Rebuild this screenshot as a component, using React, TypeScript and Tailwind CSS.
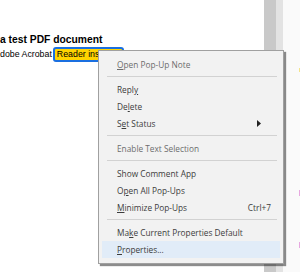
type Item = { label: string; u?: number; sub?: boolean; key?: string; dim?: boolean; hover?: boolean };

const groups: Item[][] = [
  [{ label: "Open Pop-Up Note", u: 0, dim: true }],
  [
    { label: "Reply", u: 4 },
    { label: "Delete", u: 2 },
    { label: "Set Status", u: 1, sub: true },
  ],
  [{ label: "Enable Text Selection", dim: true }],
  [
    { label: "Show Comment App" },
    { label: "Open All Pop-Ups", u: 1 },
    { label: "Minimize Pop-Ups", u: 0, key: "Ctrl+7" },
  ],
  [
    { label: "Make Current Properties Default", u: 2 },
    { label: "Properties...", u: 0, hover: true },
  ],
];

function Label({ text, u }: { text: string; u?: number }) {
  if (u === undefined) return <span>{text}</span>;
  return (
    <span>
      {text.slice(0, u)}
      <span className="underline underline-offset-1">{text[u]}</span>
      {text.slice(u + 1)}
    </span>
  );
}

function MenuRow({ item }: { item: Item }) {
  return (
    <div
      className={`mx-[3px] h-[17px] flex items-center justify-between whitespace-nowrap pl-[15px] pr-[9px] ${
        item.hover ? "bg-[#e1ecf8]" : ""
      } ${item.dim ? "text-[#6d6d6d]" : "text-[#3c3c3c]"}`}
    >
      <Label text={item.label} u={item.u} />
      {item.sub && (
        <svg width="4" height="7" viewBox="0 0 4 7" className="mr-[10px]">
          <path d="M0 0 L4 3.5 L0 7 Z" fill="#222" />
        </svg>
      )}
      {item.key && <span>{item.key}</span>}
    </div>
  );
}

export default function App() {
  return (
    <div className="relative w-[300px] h-[272px] overflow-hidden bg-white flex">
      {/* page */}
      <div className="w-[264px] h-full bg-white pt-[34px] font-['Liberation_Sans',Arial,sans-serif] text-black">
        <div className="text-[10.3px] font-bold leading-[12px] whitespace-nowrap">a test PDF document</div>
        <div className="text-[8.8px] leading-[15px] mt-[1px] whitespace-nowrap flex items-center">
          <span>dobe Acrobat</span>
          <span className="ml-[1px] px-[2px] rounded-[3px] border-2 border-[#1a6fe0] bg-[#ffd400] leading-[11px]">
            Reader installed
          </span>
        </div>
      </div>
      {/* scrollbar */}
      <div className="w-[12px] h-full bg-[#c9c9c9]" />
      <div className="w-[7px] h-full bg-[#e3e3e3]" />
      <div className="flex-1 h-full bg-[#fafafa] relative">
        <div className="absolute right-0 top-[68px] w-[1px] h-[4px] bg-[#f4e48a]" />
        <div className="absolute right-0 top-[190px] w-[1px] h-[6px] bg-[#e7a8e0]" />
        <div className="absolute right-0 top-[242px] w-[1px] h-[6px] bg-[#e7a8e0]" />
      </div>

      {/* context menu */}
      <div className="absolute left-[98px] top-[50px] w-[186px] pt-[5px] pb-[5px] bg-[#f2f2f2] border border-[#a0a0a0] shadow-[2px_2px_1px_rgba(0,0,0,0.45)] font-['Open_Sans','Noto_Sans',sans-serif] text-[8.3px] leading-[17px]">
        {groups.map((g, gi) => (
          <div key={gi}>
            {gi > 0 && <div className="mt-[3px] mb-[4px] ml-[8px] mr-[6px] h-[1px] bg-[#d2d2d2]" />}
            {g.map((it) => (
              <MenuRow key={it.label} item={it} />
            ))}
          </div>
        ))}
      </div>
    </div>
  );
}
